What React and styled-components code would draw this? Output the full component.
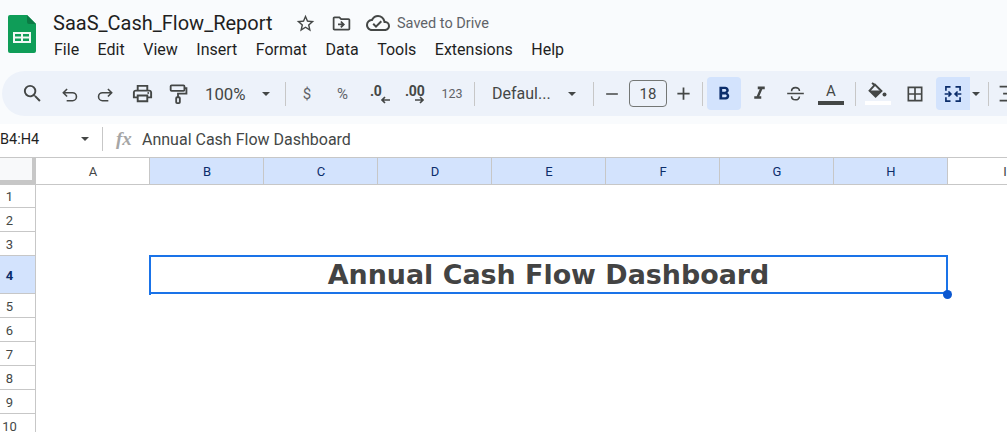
import styled, { createGlobalStyle } from "styled-components";
import {
  MdSearch,
  MdOutlinePrint,
  MdStarBorder,
  MdOutlineDriveFileMove,
  MdOutlineCloudDone,
  MdFormatBold,
  MdFormatItalic,
  MdBorderAll,
  MdAdd,
  MdRemove,
} from "react-icons/md";

const GlobalStyle = createGlobalStyle`
  html, body {
    margin: 0;
    padding: 0;
    background: #fff;
    overflow: hidden;
  }
  body {
    font-family: Roboto, "Liberation Sans", sans-serif;
    color: #444746;
  }
`;

const Page = styled.div`
  width: 1007px;
  height: 432px;
  overflow: hidden;
  display: flex;
  flex-direction: column;
  background: #fff;
`;

const Header = styled.header`
  height: 71px;
  flex: none;
  background: #f9fbfd;
  display: flex;
  box-sizing: border-box;
  padding: 9px 0 0 8px;
`;

const Logo = styled.svg`
  width: 28px;
  height: 38px;
  margin-top: 6px;
  flex: none;
`;

const HeaderText = styled.div`
  margin-left: 17px;
  display: flex;
  flex-direction: column;
`;

const TitleRow = styled.div`
  display: flex;
  align-items: center;
  height: 28px;
`;

const DocName = styled.span`
  font-size: 20px;
  color: #1f1f1f;
  width: 242px;
`;

const TitleIcon = styled.span`
  display: flex;
  width: ${(p) => p.$w}px;
  font-size: ${(p) => p.$size || 21}px;
  color: #444746;
`;

const Saved = styled.span`
  font-size: 14.5px;
  color: #5f6368;
`;

const MenuBar = styled.nav`
  display: flex;
  margin-top: 3px;
  margin-left: 1px;
  gap: 18.5px;
  font-size: 16px;
  color: #1f1f1f;
  line-height: 20px;
`;

const BarArea = styled.div`
  flex: none;
  background: #f9fbfd;
  height: 53px;
`;

const Toolbar = styled.div`
  height: 45px;
  margin-left: 2px;
  box-sizing: border-box;
  padding-left: 12px;
  background: #edf2fa;
  border-radius: 24px 0 0 24px;
  display: flex;
  align-items: center;
  overflow: hidden;
`;

const Tool = styled.div`
  flex: none;
  width: ${(p) => p.$w || 36}px;
  height: 33px;
  display: flex;
  align-items: center;
  justify-content: ${(p) => (p.$left ? "flex-start" : "center")};
  padding-left: ${(p) => p.$left || 0}px;
  box-sizing: border-box;
  font-size: ${(p) => p.$size || 14}px;
  color: ${(p) => p.$color || "#444746"};
  background: ${(p) => (p.$on ? "#d3e3fd" : "transparent")};
  border-radius: ${(p) => (p.$on === "left" ? "4px 0 0 4px" : "4px")};
  & svg {
    font-size: ${(p) => p.$icon || 21}px;
    color: ${(p) => (p.$on ? "#0b2d6b" : "#444746")};
  }
`;

const Caret = styled.i`
  width: 0;
  height: 0;
  border-left: 4.5px solid transparent;
  border-right: 4.5px solid transparent;
  border-top: 4.5px solid #444746;
`;

const Sep = styled.div`
  flex: none;
  width: 1px;
  height: 24px;
  background: ${(p) => (p.$hidden ? "transparent" : "#c7c7c7")};
  margin: 0 ${(p) => p.$r || 0}px 0 ${(p) => p.$l || 0}px;
`;

const SizeInput = styled.div`
  flex: none;
  width: 38px;
  height: 27px;
  box-sizing: border-box;
  border: 1px solid #747775;
  border-radius: 4px;
  display: flex;
  align-items: center;
  justify-content: center;
  font-size: 15px;
  color: #444746;
`;

const DecimalWrap = styled.div`
  width: 24px;
  height: 24px;
  box-sizing: border-box;
  padding-left: ${(p) => p.$pad}px;
  font-weight: 700;
  font-size: 14px;
  line-height: 18px;
  letter-spacing: -0.2px;
`;

const DecimalArrow = styled.svg`
  display: block;
  width: 10px;
  height: 8px;
  margin: -4px 0 0 ${(p) => p.$shift}px;
`;

const ColorBar = styled.div`
  display: flex;
  flex-direction: column;
  align-items: center;
  width: 26px;
  & svg {
    display: block;
  }
`;

const Swatch = styled.div`
  width: 26px;
  height: 4px;
  margin-top: ${(p) => p.$top || 0}px;
  background: ${(p) => p.$color};
`;

const LetterA = styled.span`
  font-size: 15px;
  line-height: 17px;
  color: #444746;
`;

const FormulaBar = styled.div`
  height: 33px;
  flex: none;
  background: #fff;
  display: flex;
  align-items: center;
  font-size: 16px;
  color: #444746;
  padding-bottom: 3px;
  box-sizing: border-box;
`;

const NameBox = styled.div`
  width: 81px;
  flex: none;
  color: #1f1f1f;
  font-size: 14.5px;
`;

const Fx = styled.span`
  font-family: "Liberation Serif", serif;
  font-style: italic;
  font-weight: 700;
  font-size: 19px;
  color: #a6a6a6;
  width: 26px;
  margin-left: 13px;
`;

const FormulaText = styled.span`
  margin-left: 0;
`;

const ColHeaders = styled.div`
  display: flex;
  height: 28px;
  flex: none;
  box-sizing: border-box;
  border-top: 1px solid #c7c7c7;
  border-bottom: 1px solid #c7c7c7;
  position: relative;
  z-index: 1;
  margin-bottom: -1px;
`;

const Corner = styled.div`
  width: 36px;
  flex: none;
  box-sizing: border-box;
  background: #f8f9fa;
  border-right: 4px solid #c7c7c7;
  border-bottom: 4px solid #c7c7c7;
`;

const ColHead = styled.div`
  width: 114px;
  flex: none;
  box-sizing: border-box;
  border-right: 1px solid #c7c7c7;
  padding-left: 1px;
  display: flex;
  align-items: center;
  justify-content: center;
  font-size: 13px;
  color: ${(p) => (p.$on ? "#0b2d6b" : "#444746")};
  background: ${(p) => (p.$on ? "#d3e3fd" : "#fff")};
`;

const SheetBody = styled.div`
  display: flex;
  flex: 1;
  min-height: 0;
`;

const RowHeaders = styled.div`
  width: 36px;
  flex: none;
  box-sizing: border-box;
  border-right: 1px solid #c7c7c7;
`;

const RowHead = styled.div`
  height: ${(p) => p.$h || 24}px;
  box-sizing: border-box;
  border-bottom: 1px solid #c7c7c7;
  display: flex;
  align-items: center;
  justify-content: center;
  padding: 2px 16px 0 0;
  font-size: 13px;
  font-weight: ${(p) => (p.$on ? 700 : 400)};
  color: ${(p) => (p.$on ? "#0b2d6b" : "#444746")};
  background: ${(p) => (p.$on ? "#d3e3fd" : "#fff")};
`;

const Canvas = styled.div`
  flex: 1;
  display: grid;
  grid-template-columns: 113px repeat(7, 114px) 1fr;
  grid-template-rows: repeat(3, 24px) 38px;
  align-content: start;
`;

const MergedCell = styled.div`
  grid-column: 2 / 9;
  grid-row: 4;
  position: relative;
  box-sizing: border-box;
  margin: -1px -1px 0 0;
  border: 2px solid #1a73e8;
  display: flex;
  align-items: center;
  justify-content: center;
  font-family: "DejaVu Sans", sans-serif;
  font-weight: 700;
  font-size: 26.9px;
  color: #434343;
  &::after {
    content: "";
    position: absolute;
    left: -2px;
    bottom: -3px;
    width: 2px;
    height: 2px;
    background: #1a73e8;
  }
`;

const Handle = styled.span`
  position: absolute;
  right: -6px;
  bottom: -7px;
  width: 9px;
  height: 9px;
  border-radius: 50%;
  background: #0b57d0;
`;

const MENUS = ["File", "Edit", "View", "Insert", "Format", "Data", "Tools", "Extensions", "Help"];
const COLS = ["B", "C", "D", "E", "F", "G", "H"];
const ROWS = [1, 2, 3, 4, 5, 6, 7, 8, 9, 10];

const Stroke = ({ children, size = 21, weight = 2 }) => (
  <svg width={size} height={size} viewBox="0 0 24 24" fill="none" stroke="currentColor" strokeWidth={weight}>
    {children}
  </svg>
);

const SheetsLogo = () => (
  <Logo viewBox="0 0 28 38">
    <path d="M2 0h17l9 9v27a2 2 0 0 1-2 2H2a2 2 0 0 1-2-2V2a2 2 0 0 1 2-2z" fill="#0f9d58" />
    <path d="M19 0l9 9h-7a2 2 0 0 1-2-2z" fill="#0b7a44" />
    <path d="M5 17h18v11H5z M7 19v2.5h6V19z M15 19v2.5h6V19z M7 23.5V26h6v-2.5z M15 23.5V26h6v-2.5z" fill="#f1f8f4" fillRule="evenodd" />
  </Logo>
);

const DecimalLess = () => (
  <DecimalWrap $pad={4}>
    .0
    <DecimalArrow $shift={10} viewBox="0 0 10 8">
      <path d="M10 4H2M5 1L2 4l3 3" stroke="#444746" strokeWidth="1.7" fill="none" />
    </DecimalArrow>
  </DecimalWrap>
);

const DecimalMore = () => (
  <DecimalWrap $pad={2}>
    .00
    <DecimalArrow $shift={10} viewBox="0 0 10 8">
      <path d="M0 4h8M5 1l3 3-3 3" stroke="#444746" strokeWidth="1.7" fill="none" />
    </DecimalArrow>
  </DecimalWrap>
);

const PaintIcon = () => (
  <Stroke size={22} weight={2}>
    <rect x="4" y="2.5" width="15" height="6" rx="1" />
    <path d="M19 5.5h2.2v6H12v4" />
    <rect x="10" y="15.5" width="4" height="6.5" rx="1" />
  </Stroke>
);

const StrikeIcon = () => (
  <Stroke size={21} weight={1.8}>
    <path d="M2.5 12h19M7.5 9.5C7.5 4 16.5 4 16.5 9M7.5 15c0 5.5 9 5.5 9 .5" />
  </Stroke>
);

const FillIcon = () => (
  <svg width="20" height="17" viewBox="0 0 20 17">
    <path d="M4 1l3.2 2.4M7 2.6L13.4 9 7.6 14.6 1.6 8.6z" fill="none" stroke="#444746" strokeWidth="2" />
    <path d="M1.6 8.6h11.8L7.6 14.6z" fill="#444746" />
    <circle cx="16.5" cy="12.5" r="2" fill="#444746" />
  </svg>
);

const MergeIcon = () => (
  <Stroke size={20}>
    <path d="M3.5 8V3.5H9M15 3.5h5.5V8M3.5 16v4.5H9M15 20.5h5.5V16" />
    <path d="M2 12h7M6.5 9l3 3-3 3M22 12h-7M17.5 9l-3 3 3 3" />
  </Stroke>
);

const AlignIcon = () => (
  <Stroke>
    <path d="M3 4h18M7 12h14M3 20h18" />
  </Stroke>
);

export default function App() {
  return (
    <Page>
      <GlobalStyle />
      <Header>
        <SheetsLogo />
        <HeaderText>
          <TitleRow>
            <DocName>SaaS_Cash_Flow_Report</DocName>
            <TitleIcon $w={36}><MdStarBorder /></TitleIcon>
            <TitleIcon $w={35}><MdOutlineDriveFileMove /></TitleIcon>
            <TitleIcon $w={31} $size={24}><MdOutlineCloudDone /></TitleIcon>
            <Saved>Saved to Drive</Saved>
          </TitleRow>
          <MenuBar>
            {MENUS.map((m) => (
              <span key={m}>{m}</span>
            ))}
          </MenuBar>
        </HeaderText>
      </Header>
      <BarArea>
        <Toolbar>
          <Tool $w={36} $icon={23}><MdSearch /></Tool>
          <Tool $w={40}>
            <Stroke size={20} weight={1.9}><path d="M8.5 15L4 10.5 8.5 6M4.5 10.5H15a4.5 4.5 0 0 1 0 9.5H8" /></Stroke>
          </Tool>
          <Tool $w={30}>
            <Stroke size={20} weight={1.9}><path d="M15.5 15l4.5-4.5L15.5 6M19.5 10.5H9a4.5 4.5 0 0 0 0 9.5h7" /></Stroke>
          </Tool>
          <Tool $w={44} $icon={23}><MdOutlinePrint /></Tool>
          <Tool $w={28}><PaintIcon /></Tool>
          <Tool $w={66} $left={13} $size={16.8}>100%</Tool>
          <Tool $w={16}><Caret /></Tool>
          <Sep $l={11} />
          <Tool $w={42} $size={15} $color="#5f6368">$</Tool>
          <Tool $w={34} $left={9} $size={15} $color="#5f6368">%</Tool>
          <Tool $w={32}><DecimalLess /></Tool>
          <Tool $w={42}><DecimalMore /></Tool>
          <Tool $w={32} $size={12.5} $color="#5f6368">123</Tool>
          <Sep $l={6} />
          <Tool $w={89} $left={17} $size={16}>Defaul...</Tool>
          <Tool $w={16}><Caret /></Tool>
          <Sep $l={13} />
          <Tool $w={35} $icon={20}><MdRemove /></Tool>
          <SizeInput>18</SizeInput>
          <Tool $w={32} $icon={21}><MdAdd /></Tool>
          <Sep $l={3} $r={4} />
          <Tool $w={34} $on="all" $icon={22}><MdFormatBold /></Tool>
          <Tool $w={36} $icon={21}><MdFormatItalic /></Tool>
          <Tool $w={36}><StrikeIcon /></Tool>
          <Tool $w={36}>
            <ColorBar>
              <LetterA>A</LetterA>
              <Swatch $color="#444746" $top={1} />
            </ColorBar>
          </Tool>
          <Sep $l={6} />
          <Tool $w={44}>
            <ColorBar>
              <FillIcon />
              <Swatch $color="#ffffff" $top={2} />
            </ColorBar>
          </Tool>
          <Tool $w={30} $icon={20}><MdBorderAll /></Tool>
          <Sep $l={5} $hidden />
          <Tool $w={34} $on="left"><MergeIcon /></Tool>
          <Tool $w={12}><Caret /></Tool>
          <Sep $l={6} />
          <Tool $w={32} $left={8}><AlignIcon /></Tool>
        </Toolbar>
      </BarArea>
      <FormulaBar>
        <NameBox>B4:H4</NameBox>
        <Caret />
        <Sep $l={13} />
        <Fx>fx</Fx>
        <FormulaText>Annual Cash Flow Dashboard</FormulaText>
      </FormulaBar>
      <ColHeaders>
        <Corner />
        <ColHead>A</ColHead>
        {COLS.map((c) => (
          <ColHead key={c} $on>{c}</ColHead>
        ))}
        <ColHead>I</ColHead>
      </ColHeaders>
      <SheetBody>
        <RowHeaders>
          {ROWS.map((r) => (
            <RowHead key={r} $on={r === 4} $h={r === 4 ? 38 : 24}>{r}</RowHead>
          ))}
        </RowHeaders>
        <Canvas>
          <MergedCell>
            Annual Cash Flow Dashboard
            <Handle />
          </MergedCell>
        </Canvas>
      </SheetBody>
    </Page>
  );
}
